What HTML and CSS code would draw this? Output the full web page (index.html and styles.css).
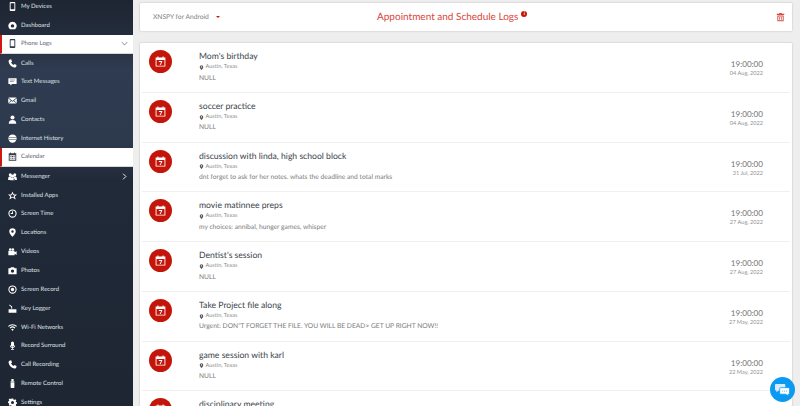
FILE: index.html
```html
<!DOCTYPE html>
<html lang="en">
<head>
  <meta charset="UTF-8">
  <meta name="viewport" content="width=device-width, initial-scale=1.0">
  <title>Appointment and Schedule Logs</title>
  <link rel="stylesheet" href="styles.css">
</head>
<body>
  <svg class="defs" width="0" height="0">
    <symbol id="i-phone" viewBox="0 0 12 12"><path d="M3.500 0h5A1.200 1.200 0 0 1 9.700 1.200v9.600A1.200 1.200 0 0 1 8.500 12h-5a1.200 1.200 0 0 1-1.200-1.200V1.200A1.200 1.200 0 0 1 3.500 0zM3.500 1.600v8.200h5V1.600z" fill-rule="evenodd"/></symbol>
    <symbol id="i-dash" viewBox="0 0 12 12"><path fill-rule="evenodd" d="M6 1a5.500 5.500 0 0 1 4.400 8.800L9.500 11h-7l-.9-1.200A5.500 5.500 0 0 1 6 1zm0 3.200a2.300 2.300 0 1 0 0 4.600 2.300 2.300 0 0 0 0-4.600z"/></symbol>
    <symbol id="i-call" viewBox="0 0 12 12"><path d="M2.700.6l1.500-.3 1.200 2.900-1.300 1a7 7 0 0 0 3.400 3.700l1.100-1.300 2.800 1.300-.3 1.600C10.700 11 9.500 11.700 8.300 11.400 4.500 10.400 1.500 7 .8 3.500.6 2.300 1.500 1 2.700.6z"/></symbol>
    <symbol id="i-text" viewBox="0 0 12 12"><path fill-rule="evenodd" d="M.5 1.500h11v7.800H5.500L3 11.300V9.300H.5zM2.500 3.500v.8h7v-.8zM2.500 5.500v.8h5v-.8z"/></symbol>
    <symbol id="i-mail" viewBox="0 0 12 12"><path d="M.5 2h11L6 6.500zM.3 3l3.500 3L.3 9.500zM11.700 3v6.500L8.200 6zM4.500 6.600 6 7.800l1.500-1.200 3.800 3.400H.7z"/></symbol>
    <symbol id="i-user" viewBox="0 0 12 12"><circle cx="6" cy="3.400" r="2.700"/><path d="M1 11.500c0-3 1.500-5 5-5s5 2 5 5z"/></symbol>
    <symbol id="i-globe" viewBox="0 0 12 12"><path fill-rule="evenodd" d="M6 .5a5.500 5.500 0 1 1 0 11 5.500 5.500 0 0 1 0-11zM1.200 4v.8h9.600V4zM1.200 7.200V8h9.600v-.8z"/></symbol>
    <symbol id="i-cal" viewBox="0 0 12 12"><path fill-rule="evenodd" d="M3 .5h1v1h4v-1h1v1h2v10H1v-10h2zM2.200 4.300v6h7.600v-6zM3.300 5.300h1.300v1.300H3.300zM5.400 5.300h1.300v1.300H5.400zM7.500 5.300h1.300v1.300H7.500zM3.300 7.600h1.300v1.300H3.300zM5.400 7.600h1.300v1.300H5.400zM7.500 7.600h1.300v1.300H7.500z"/></symbol>
    <symbol id="i-group" viewBox="0 0 12 12"><circle cx="3" cy="3.500" r="2"/><circle cx="9" cy="3.500" r="2"/><circle cx="6" cy="5.500" r="2.200"/><path d="M.2 9c0-2 1-3.500 2.800-3.500l1 .5.500 4.500H.2zM11.800 9c0-2-1-3.500-2.800-3.500l-1 .5-.5 4.500h4.300zM3 11c0-2 1-3.500 3-3.500s3 1.500 3 3.500z"/></symbol>
    <symbol id="i-apps" viewBox="0 0 12 12"><path d="M6 .8l1.700 3.700H12L9 7.200l1.300 4L6 8.800l-4.300 2.400L3 7.200 0 4.500h4.300zM6 3.600 5 5.600H3l1.400 1.300-.6 1.800L6 7.600l2.200 1.100-.6-1.800L9 5.600H7z" fill-rule="evenodd"/></symbol>
    <symbol id="i-clock" viewBox="0 0 12 12"><path fill-rule="evenodd" d="M6 .5a5.500 5.500 0 1 1 0 11 5.500 5.500 0 0 1 0-11zm0 1.400a4.100 4.100 0 1 0 0 8.200 4.100 4.100 0 0 0 0-8.200zM5.400 3h1.200v3.500H3.600V5.400h1.800z"/></symbol>
    <symbol id="i-pin" viewBox="0 0 12 12"><path fill-rule="evenodd" d="M6 .3a4.300 4.300 0 0 1 4.300 4.300C10.300 7.500 6 11.700 6 11.700S1.700 7.500 1.700 4.600A4.300 4.300 0 0 1 6 .3zm0 2.700a1.600 1.600 0 1 0 0 3.200 1.600 1.600 0 0 0 0-3.200z"/></symbol>
    <symbol id="i-video" viewBox="0 0 12 12"><circle cx="3" cy="3.200" r="1.700"/><circle cx="6.500" cy="3.200" r="1.700"/><path d="M.5 5h8.300v2l2.700-1.500v5L8.800 9v2H.5z"/></symbol>
    <symbol id="i-photo" viewBox="0 0 12 12"><path fill-rule="evenodd" d="M4 1.500h4l1 1.500h2.500v8H.5V3H3zM6 4.600a2.200 2.200 0 1 0 0 4.400 2.200 2.200 0 0 0 0-4.400z"/></symbol>
    <symbol id="i-rec" viewBox="0 0 12 12"><path fill-rule="evenodd" d="M6 .5a5.500 5.500 0 1 1 0 11 5.500 5.500 0 0 1 0-11zm0 1.400a4.100 4.100 0 1 0 0 8.200 4.100 4.100 0 0 0 0-8.200zM6 3.700a2.300 2.300 0 1 1 0 4.600 2.300 2.300 0 0 1 0-4.600z"/></symbol>
    <symbol id="i-key" viewBox="0 0 12 12"><path d="M.8 7h10.400v4.500H.8zM2 .8l3.500 2.500v3H4.300V3.900L1.500 1.800z"/></symbol>
    <symbol id="i-wifi" viewBox="0 0 12 12"><path d="M0 4a8.600 8.600 0 0 1 12 0l-1 1.100a7 7 0 0 0-10 0zM2.200 6.200a5.500 5.500 0 0 1 7.600 0l-1 1.100a4 4 0 0 0-5.600 0zM4.300 8.300a2.500 2.500 0 0 1 3.400 0L6 10.500z"/></symbol>
    <symbol id="i-mic" viewBox="0 0 12 12"><rect x="4" y=".5" width="4" height="7" rx="2"/><path d="M2.500 5.500h.8c0 3.500 5.400 3.500 5.400 0h.8c0 2.300-1.300 3.500-3 3.800v1.400h1.500v.8h-4v-.8h1.500V9.300c-1.700-.3-3-1.500-3-3.800z"/></symbol>
    <symbol id="i-usb" viewBox="0 0 12 12"><path d="M4.500 0h3v2.500h-3zM3.500 3h5v1.500h-5zM3.500 5h5v6a1 1 0 0 1-1 1h-3a1 1 0 0 1-1-1z"/></symbol>
    <symbol id="i-gear" viewBox="0 0 12 12"><path fill-rule="evenodd" d="M5 .5h2l.3 1.500 1.100.5 1.300-.8 1.400 1.400-.8 1.300.5 1.100 1.200.3v2l-1.200.3-.5 1.100.8 1.300-1.400 1.400-1.300-.8-1.100.5L7 11.500H5l-.3-1.500-1.100-.5-1.300.8L.9 9.400l.8-1.300-.5-1.100L0 6.700v-2l1.200-.3.5-1.100L.9 2l1.400-1.400 1.300.8 1.100-.5zM6 4a2 2 0 1 0 0 4 2 2 0 0 0 0-4z"/></symbol>
    <symbol id="i-event" viewBox="0 0 14 14"><path fill-rule="evenodd" d="M3 .5h1.400v1.300h5.200V.5H11v1.300h2.200v11.700H.8V1.800H3zM1.900 5v7.400h10.200V5z"/><path d="M4.900 6.300h4.300v1L7.200 11.500H5.900l1.900-4H4.900z"/></symbol>
  </svg>

  <div class="app">
    <nav class="sidebar">
      <a class="nav-item"><svg class="nav-icon"><use href="#i-phone"/></svg>My Devices</a>
      <a class="nav-item"><svg class="nav-icon"><use href="#i-dash"/></svg>Dashboard</a>
      <a class="nav-item active"><svg class="nav-icon"><use href="#i-phone"/></svg>Phone Logs<svg class="caret" viewBox="0 0 10 10"><path d="M1 3l4 4 4-4"/></svg></a>
      <a class="nav-item"><svg class="nav-icon"><use href="#i-call"/></svg>Calls</a>
      <a class="nav-item"><svg class="nav-icon"><use href="#i-text"/></svg>Text Messages</a>
      <a class="nav-item"><svg class="nav-icon"><use href="#i-mail"/></svg>Gmail</a>
      <a class="nav-item"><svg class="nav-icon"><use href="#i-user"/></svg>Contacts</a>
      <a class="nav-item"><svg class="nav-icon"><use href="#i-globe"/></svg>Internet History</a>
      <a class="nav-item active"><svg class="nav-icon"><use href="#i-cal"/></svg>Calendar</a>
      <a class="nav-item"><svg class="nav-icon"><use href="#i-group"/></svg>Messenger<svg class="caret" viewBox="0 0 10 10"><path d="M3 1l4 4-4 4"/></svg></a>
      <a class="nav-item"><svg class="nav-icon"><use href="#i-apps"/></svg>Installed Apps</a>
      <a class="nav-item"><svg class="nav-icon"><use href="#i-clock"/></svg>Screen Time</a>
      <a class="nav-item"><svg class="nav-icon"><use href="#i-pin"/></svg>Locations</a>
      <a class="nav-item"><svg class="nav-icon"><use href="#i-video"/></svg>Videos</a>
      <a class="nav-item"><svg class="nav-icon"><use href="#i-photo"/></svg>Photos</a>
      <a class="nav-item"><svg class="nav-icon"><use href="#i-rec"/></svg>Screen Record</a>
      <a class="nav-item"><svg class="nav-icon"><use href="#i-key"/></svg>Key Logger</a>
      <a class="nav-item"><svg class="nav-icon"><use href="#i-wifi"/></svg>Wi-Fi Networks</a>
      <a class="nav-item"><svg class="nav-icon"><use href="#i-mic"/></svg>Record Surround</a>
      <a class="nav-item"><svg class="nav-icon"><use href="#i-call"/></svg>Call Recording</a>
      <a class="nav-item"><svg class="nav-icon"><use href="#i-usb"/></svg>Remote Control</a>
      <a class="nav-item"><svg class="nav-icon"><use href="#i-gear"/></svg>Settings</a>
    </nav>

    <main class="content">
      <header class="topbar">
        <div class="device-select">XNSPY for Android<span class="select-arrow"></span></div>
        <h1 class="page-title">Appointment and Schedule Logs<span class="info-badge">i</span></h1>
        <svg class="trash" viewBox="0 0 12 12"><path fill-rule="evenodd" d="M4.300.5h3.400v1.200H11v1.500H1V1.700h3.300zM1.800 4h8.400v7.500H1.800zM3 5.200v5.100h6V5.200zM4.400 6h1v3.500h-1zM6.600 6h1v3.500h-1z"/></svg>
      </header>

      <section class="log-list">
        <article class="log-row">
          <div class="log-icon"><svg><use href="#i-event"/></svg></div>
          <div class="log-body">
            <h2 class="log-title">Mom's birthday</h2>
            <div class="log-place"><svg class="place-pin"><use href="#i-pin"/></svg>Austin, Texas</div>
            <p class="log-note">NULL</p>
          </div>
          <div class="log-time"><div class="time">19:00:00</div><div class="date">04 Aug, 2022</div></div>
        </article>
        <article class="log-row">
          <div class="log-icon"><svg><use href="#i-event"/></svg></div>
          <div class="log-body">
            <h2 class="log-title">soccer practice</h2>
            <div class="log-place"><svg class="place-pin"><use href="#i-pin"/></svg>Austin, Texas</div>
            <p class="log-note">NULL</p>
          </div>
          <div class="log-time"><div class="time">19:00:00</div><div class="date">04 Aug, 2022</div></div>
        </article>
        <article class="log-row">
          <div class="log-icon"><svg><use href="#i-event"/></svg></div>
          <div class="log-body">
            <h2 class="log-title">discussion with linda, high school block</h2>
            <div class="log-place"><svg class="place-pin"><use href="#i-pin"/></svg>Austin, Texas</div>
            <p class="log-note">dnt forget to ask for her notes. whats the deadline and total marks</p>
          </div>
          <div class="log-time"><div class="time">19:00:00</div><div class="date">31 Jul, 2022</div></div>
        </article>
        <article class="log-row">
          <div class="log-icon"><svg><use href="#i-event"/></svg></div>
          <div class="log-body">
            <h2 class="log-title">movie matinnee preps</h2>
            <div class="log-place"><svg class="place-pin"><use href="#i-pin"/></svg>Austin, Texas</div>
            <p class="log-note">my choices: annibal, hunger games, whisper</p>
          </div>
          <div class="log-time"><div class="time">19:00:00</div><div class="date">27 Aug, 2022</div></div>
        </article>
        <article class="log-row">
          <div class="log-icon"><svg><use href="#i-event"/></svg></div>
          <div class="log-body">
            <h2 class="log-title">Dentist's session</h2>
            <div class="log-place"><svg class="place-pin"><use href="#i-pin"/></svg>Austin, Texas</div>
            <p class="log-note">NULL</p>
          </div>
          <div class="log-time"><div class="time">19:00:00</div><div class="date">27 Aug, 2022</div></div>
        </article>
        <article class="log-row">
          <div class="log-icon"><svg><use href="#i-event"/></svg></div>
          <div class="log-body">
            <h2 class="log-title">Take Project file along</h2>
            <div class="log-place"><svg class="place-pin"><use href="#i-pin"/></svg>Austin, Texas</div>
            <p class="log-note">Urgent: DON"T FORGET THE FILE. YOU WILL BE DEAD&gt; GET UP RIGHT NOW!!</p>
          </div>
          <div class="log-time"><div class="time">19:00:00</div><div class="date">27 May, 2022</div></div>
        </article>
        <article class="log-row">
          <div class="log-icon"><svg><use href="#i-event"/></svg></div>
          <div class="log-body">
            <h2 class="log-title">game session with karl</h2>
            <div class="log-place"><svg class="place-pin"><use href="#i-pin"/></svg>Austin, Texas</div>
            <p class="log-note">NULL</p>
          </div>
          <div class="log-time"><div class="time">19:00:00</div><div class="date">22 May, 2022</div></div>
        </article>
        <article class="log-row">
          <div class="log-icon"><svg><use href="#i-event"/></svg></div>
          <div class="log-body">
            <h2 class="log-title">disciplinary meeting</h2>
          </div>
        </article>
      </section>
    </main>
  </div>

  <button class="chat-btn" aria-label="Chat">
    <svg viewBox="0 0 16 16">
      <path fill="#d6ecfb" d="M1 2h9a1 1 0 0 1 1 1v5a1 1 0 0 1-1 1H4l-2.500 2V9H1a1 1 0 0 1-1-1V3a1 1 0 0 1 1-1z"/>
      <path fill="#fff" stroke="#0a9af2" stroke-width=".8" d="M6 6h8.500a1 1 0 0 1 1 1v5a1 1 0 0 1-1 1H14v2l-2.500-2H6a1 1 0 0 1-1-1V7a1 1 0 0 1 1-1z"/>
      <path fill="#0a9af2" d="M7.800 9.200h.9v.9h-.9zM9.800 9.200h.9v.9h-.9zM11.800 9.200h.9v.9h-.9z"/>
    </svg>
  </button>
</body>
</html>
```

FILE: styles.css
```css
* {
  box-sizing: border-box;
}
html, body {
  height: 100%;
}
body {
  margin: 0;
  overflow: hidden;
  background: #eeeeee;
  font-family: "Lato", "Liberation Sans", sans-serif;
  color: #444;
  text-rendering: geometricPrecision;
}
.defs {
  position: absolute;
}
.app {
  display: flex;
  height: 406px;
}

/* sidebar */
.sidebar {
  width: 133px;
  flex-shrink: 0;
  height: 406px;
  overflow: hidden;
  background:
    radial-gradient(rgba(255, 255, 255, 0.05) 0.5px, transparent 0.7px) 0 0 / 4px 4px,
    linear-gradient(180deg, #1e2532 0, #232c3b 32px, #2f3b50 70px, #2d394d 140px, #212a39 180px, #1e2633 406px);
}
.nav-item {
  display: flex;
  align-items: center;
  height: 18.86px;
  padding-left: 8px;
  font-size: 6.05px;
  color: #dde0e5;
  position: relative;
  top: -3px;
}
.nav-icon {
  width: 9px;
  height: 9px;
  margin-right: 4px;
  fill: #fff;
  flex-shrink: 0;
}
.nav-item.active {
  background: #fff;
  color: #5f6570;
  border-left: 2px solid #cc1a10;
  border-bottom: 1px solid #d8d8d8;
  padding-left: 6px;
}
.nav-item.active .nav-icon {
  fill: #333b48;
}
.caret {
  width: 7px;
  height: 7px;
  margin-left: auto;
  margin-right: 5px;
  fill: none;
  stroke: #fff;
  stroke-width: 1.3;
}
.nav-item.active .caret {
  stroke: #555;
  stroke-width: 1;
}

/* main */
.content {
  flex: 1;
  padding: 3px 8px 0 7px;
  min-width: 0;
}
.topbar {
  height: 28px;
  background: #fff;
  border-radius: 1px;
  box-shadow: 0 0 2px rgba(0, 0, 0, 0.25);
  display: flex;
  align-items: center;
  padding: 0 5px 0 13px;
}
.device-select {
  font-size: 6.7px;
  color: #808080;
  display: flex;
  align-items: center;
  width: 224px;
}
.select-arrow {
  margin-left: 7px;
  border-left: 2.5px solid transparent;
  border-right: 2.5px solid transparent;
  border-top: 2.5px solid #cc1a10;
}
.page-title {
  margin: 0;
  flex: 1;
  font-size: 10px;
  font-weight: 400;
  color: #d8463c;
  display: flex;
}
.info-badge {
  width: 6px;
  height: 6px;
  border-radius: 50%;
  background: #c8130a;
  color: #fff;
  font-size: 5px;
  font-weight: 700;
  line-height: 6px;
  text-align: center;
  margin: 0 0 0 3px;
}
.trash {
  width: 9px;
  height: 10px;
  fill: #d64a40;
  margin-right: 2px;
}

/* log list */
.log-list {
  margin-top: 12px;
  background: #fff;
  border-radius: 1px;
  box-shadow: 0 0 2px rgba(0, 0, 0, 0.25);
  padding: 0 2px;
  height: 380px;
  overflow: hidden;
}
.log-row {
  display: flex;
  height: 49.75px;
  border-bottom: 1px solid #f0f0f0;
  padding: 7px 0 0 7px;
}
.log-icon {
  width: 23px;
  height: 23px;
  border-radius: 50%;
  background: #c4150a;
  display: flex;
  align-items: center;
  justify-content: center;
  flex-shrink: 0;
}
.log-icon svg {
  width: 11px;
  height: 11px;
  fill: #fff;
}
.log-body {
  margin: -1px 0 0 27px;
  flex: 1;
}
.log-title {
  margin: 0;
  font-size: 8.65px;
  font-weight: 400;
  color: #3a3f4a;
  line-height: 13px;
}
.log-place {
  display: flex;
  align-items: center;
  font-size: 5.6px;
  color: #8c8c8c;
  line-height: 10.5px;
}
.place-pin {
  width: 5px;
  height: 5px;
  margin-right: 1.5px;
  fill: #555;
}
.log-note {
  margin: 0;
  font-size: 6.7px;
  color: #7c7c7c;
  line-height: 10px;
}
.log-time {
  text-align: right;
  padding: 8px 27px 0 0;
}
.time {
  font-size: 8.1px;
  color: #777;
  line-height: 12px;
}
.date {
  font-size: 5.6px;
  color: #949494;
  line-height: 8px;
}

.chat-btn {
  position: fixed;
  left: 770px;
  top: 377px;
  width: 25px;
  height: 25px;
  border: 0;
  padding: 5px;
  border-radius: 50%;
  background: #0a9af2;
}
.chat-btn svg {
  display: block;
  width: 15px;
  height: 15px;
}
```
